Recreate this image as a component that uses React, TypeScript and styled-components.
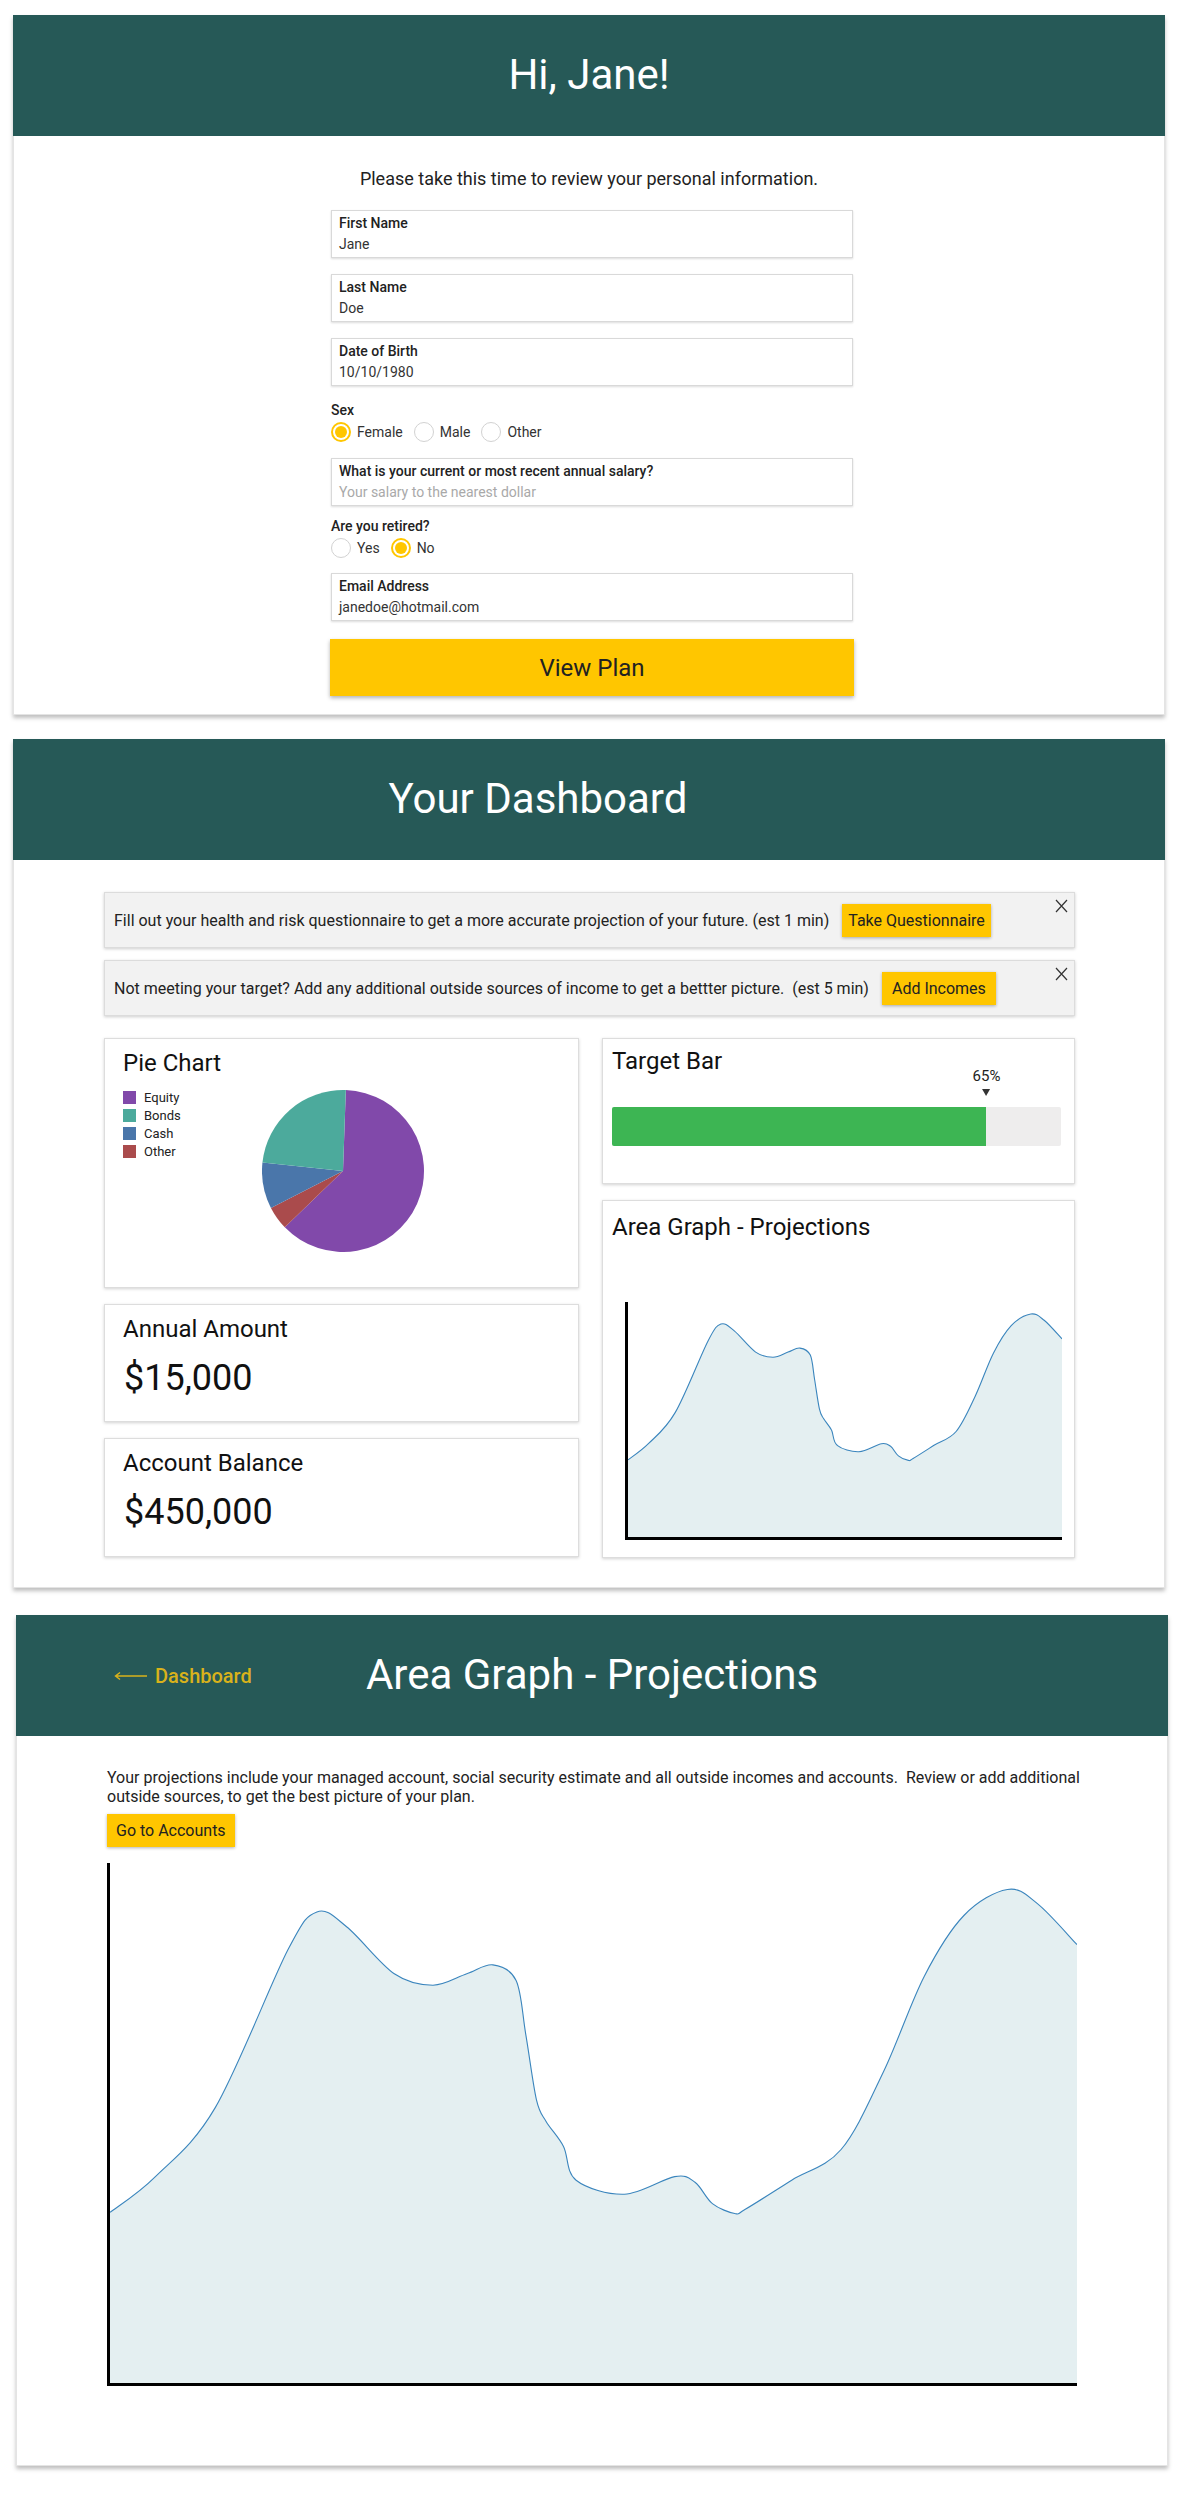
import React from "react";
import styled, { createGlobalStyle } from "styled-components";

const GlobalStyle = createGlobalStyle`
  html, body { margin: 0; padding: 0; background: #ffffff; }
  body {
    font-family: Roboto, "Liberation Sans", Arial, sans-serif;
    color: #222222;
  }
  * { box-sizing: border-box; }
`;

const TEAL = "#265957";
const YELLOW = "#FFC600";

const Page = styled.div`
  width: 1196px;
  padding-bottom: 48px;
  display: flex;
  flex-direction: column;
`;

const Card = styled.section<{ $left: number; $top: number }>`
  margin: ${(p) => p.$top}px 0 0 ${(p) => p.$left}px;
  width: 1152px;
  background: #ffffff;
  border: 1px solid #e4e4e4;
  border-top: none;
  box-shadow: 0 3px 4px rgba(0, 0, 0, 0.25);
`;

const Header = styled.header<{ $shift?: number }>`
  height: 121px;
  margin: 0 -1px;
  background: ${TEAL};
  display: grid;
  grid-template-columns: 1fr auto 1fr;
  align-items: center;
  padding-right: ${(p) => p.$shift ?? 0}px;
`;

const HeaderTitle = styled.h1<{ $size: number }>`
  grid-column: 2;
  margin: 0;
  font-size: ${(p) => p.$size}px;
  font-weight: 400;
  line-height: 1.2;
  color: #ffffff;
  white-space: nowrap;
`;

const BackLink = styled.a`
  grid-column: 1;
  justify-self: start;
  margin-left: 98px;
  display: flex;
  align-items: center;
  gap: 8px;
  color: #d9b21b;
  font-size: 20px;
  font-weight: 500;
  text-decoration: none;
`;

/* ---------- Card 1: personal information form ---------- */

const FormBody = styled.div`
  padding: 32px 0 18px;
  display: flex;
  flex-direction: column;
  align-items: center;
`;

const Intro = styled.p`
  margin: 0 0 21px;
  font-size: 18px;
  line-height: 21px;
  color: #222222;
`;

const Form = styled.div`
  width: 522px;
  margin-left: 6px;
  display: flex;
  flex-direction: column;
`;

const Field = styled.div<{ $gap: number }>`
  margin-top: ${(p) => p.$gap}px;
  height: 48px;
  padding: 4px 7px 3px;
  border: 1px solid #d9d9d9;
  box-shadow: 0 1px 2px rgba(0, 0, 0, 0.14);
  background: #ffffff;
`;

const FieldLabel = styled.div`
  font-size: 14px;
  font-weight: 500;
  line-height: 17px;
  color: #222222;
`;

const FieldValue = styled.div<{ $placeholder?: boolean }>`
  margin-top: 4px;
  font-size: 14px;
  line-height: 17px;
  color: ${(p) => (p.$placeholder ? "#a9a9a9" : "#333333")};
`;

const GroupLabel = styled.div<{ $gap: number }>`
  margin-top: ${(p) => p.$gap}px;
  font-size: 14px;
  font-weight: 500;
  line-height: 16px;
  color: #222222;
`;

const RadioRow = styled.div`
  margin-top: 4px;
  height: 20px;
  display: flex;
  align-items: center;
  gap: 11px;
`;

const RadioOption = styled.label`
  display: flex;
  align-items: center;
  gap: 6px;
  font-size: 14px;
  color: #333333;
`;

const RadioCircle = styled.span<{ $checked?: boolean }>`
  width: 20px;
  height: 20px;
  border-radius: 50%;
  border: ${(p) => (p.$checked ? `2px solid ${YELLOW}` : "1px solid #d2d2d2")};
  background: #ffffff;
  display: inline-flex;
  align-items: center;
  justify-content: center;
  &::after {
    content: "";
    width: 12px;
    height: 12px;
    border-radius: 50%;
    background: ${(p) => (p.$checked ? YELLOW : "transparent")};
  }
`;

const PrimaryButton = styled.button`
  margin: 18px 0 0 -1px;
  width: 524px;
  height: 57px;
  border: none;
  background: ${YELLOW};
  box-shadow: 0 2px 4px rgba(0, 0, 0, 0.3);
  font-family: inherit;
  font-size: 24px;
  color: #222222;
  cursor: pointer;
`;

/* ---------- Card 2: dashboard ---------- */

const DashBody = styled.div`
  padding: 32px 89px 29px 90px;
  display: flex;
  flex-direction: column;
`;

const Banner = styled.div<{ $gap: number }>`
  position: relative;
  margin-top: ${(p) => p.$gap}px;
  height: 56px;
  padding: 0 9px;
  display: flex;
  align-items: center;
  gap: 13px;
  background: #f2f2f2;
  border: 1px solid #dcdcdc;
  box-shadow: 0 1px 3px rgba(0, 0, 0, 0.2);
  font-size: 16px;
  color: #222222;
  white-space: pre;
`;

const CloseButton = styled.button`
  position: absolute;
  top: 5px;
  right: 5px;
  width: 15px;
  height: 15px;
  padding: 0;
  border: none;
  background: transparent;
  display: flex;
  align-items: center;
  justify-content: center;
`;

const SmallButton = styled.button<{ $padX?: number }>`
  height: 33px;
  padding: 0 ${(p) => p.$padX ?? 6}px;
  border: none;
  background: ${YELLOW};
  box-shadow: 0 1px 3px rgba(0, 0, 0, 0.3);
  font-family: inherit;
  font-size: 16px;
  color: #222222;
  cursor: pointer;
`;

const DashGrid = styled.div`
  margin-top: 22px;
  display: grid;
  grid-template-columns: 475px 473px;
  column-gap: 23px;
`;

const Column = styled.div`
  display: flex;
  flex-direction: column;
  gap: 16px;
`;

const Tile = styled.div<{ $h: number; $pad: string }>`
  height: ${(p) => p.$h}px;
  padding: ${(p) => p.$pad};
  background: #ffffff;
  border: 1px solid #dddddd;
  box-shadow: 0 1px 3px rgba(0, 0, 0, 0.18);
  display: flex;
  flex-direction: column;
`;

const TileTitle = styled.h2<{ $lh?: number }>`
  margin: 0;
  font-size: 24px;
  font-weight: 400;
  line-height: ${(p) => p.$lh ?? 28}px;
  color: #111111;
`;

const BigValue = styled.div`
  margin-top: 14px;
  margin-left: 1px;
  font-size: 36px;
  line-height: 42px;
  color: #111111;
`;

const PieRow = styled.div`
  margin-top: 13px;
  display: flex;
  align-items: flex-start;
`;

const Legend = styled.ul`
  list-style: none;
  margin: -2px 0 0;
  padding: 0;
  width: 139px;
`;

const LegendItem = styled.li`
  height: 18px;
  display: flex;
  align-items: center;
  gap: 8px;
  font-size: 13px;
  color: #222222;
`;

const Swatch = styled.span<{ $color: string }>`
  width: 13px;
  height: 13px;
  background: ${(p) => p.$color};
`;

const BarTrack = styled.div`
  position: relative;
  margin-top: 34px;
  height: 39px;
  border-radius: 2px;
  background: #eeeded;
`;

const BarFill = styled.div`
  height: 100%;
  border-radius: 2px 0 0 2px;
  background: #3db553;
`;

const BarMarker = styled.div`
  position: absolute;
  bottom: calc(100% + 11px);
  transform: translateX(-50%);
  display: flex;
  flex-direction: column;
  align-items: center;
  gap: 4px;
  font-size: 15px;
  line-height: 17px;
  color: #222222;
`;

const Triangle = styled.span`
  width: 0;
  height: 0;
  border-left: 4px solid transparent;
  border-right: 4px solid transparent;
  border-top: 7px solid #333333;
`;

const ChartBox = styled.div<{ $top: number; $left: number }>`
  margin: ${(p) => p.$top}px 0 0 ${(p) => p.$left}px;
  line-height: 0;
`;

/* ---------- Card 3: projections ---------- */

const ProjBody = styled.div`
  padding: 32px 0 79px 90px;
  display: flex;
  flex-direction: column;
  align-items: flex-start;
`;

const ProjText = styled.p`
  margin: 0;
  width: 990px;
  font-size: 16px;
  line-height: 19px;
  color: #222222;
  white-space: pre-wrap;
`;

const AccountsButton = styled(SmallButton)`
  margin-top: 8px;
`;

/* ---------- drawings ---------- */

const CURVE: [number, number][] = [
  [0, 0.328],
  [0.047, 0.397],
  [0.109, 0.53],
  [0.184, 0.833],
  [0.214, 0.906],
  [0.245, 0.877],
  [0.294, 0.787],
  [0.334, 0.765],
  [0.369, 0.787],
  [0.396, 0.804],
  [0.42, 0.774],
  [0.43, 0.67],
  [0.441, 0.545],
  [0.451, 0.503],
  [0.469, 0.455],
  [0.482, 0.39],
  [0.532, 0.363],
  [0.584, 0.397],
  [0.605, 0.386],
  [0.623, 0.345],
  [0.646, 0.326],
  [0.657, 0.334],
  [0.705, 0.39],
  [0.756, 0.449],
  [0.8, 0.599],
  [0.842, 0.782],
  [0.883, 0.899],
  [0.928, 0.949],
  [0.959, 0.922],
  [1, 0.843],
];

function curvePath(w: number, h: number, x0: number, y0: number): string {
  const pts = CURVE.map(([nx, ny]) => [x0 + nx * w, y0 - ny * h]);
  let d = `M${pts[0][0].toFixed(1)},${pts[0][1].toFixed(1)}`;
  for (let i = 0; i < pts.length - 1; i++) {
    const p0 = pts[Math.max(0, i - 1)];
    const p1 = pts[i];
    const p2 = pts[i + 1];
    const p3 = pts[Math.min(pts.length - 1, i + 2)];
    const c1x = p1[0] + (p2[0] - p0[0]) / 6;
    const c1y = p1[1] + (p2[1] - p0[1]) / 6;
    const c2x = p2[0] - (p3[0] - p1[0]) / 6;
    const c2y = p2[1] - (p3[1] - p1[1]) / 6;
    d += ` C${c1x.toFixed(1)},${c1y.toFixed(1)} ${c2x.toFixed(1)},${c2y.toFixed(1)} ${p2[0].toFixed(1)},${p2[1].toFixed(1)}`;
  }
  return d;
}

function AreaChart({ width, height }: { width: number; height: number }) {
  const x0 = 3;
  const y0 = height - 3;
  const pw = width - 3;
  const ph = height - 3;
  const line = curvePath(pw, ph, x0, y0);
  const fill = `M${x0},${y0} L${x0},${(y0 - CURVE[0][1] * ph).toFixed(1)} ${line.slice(1)} L${x0 + pw},${y0} Z`;
  return (
    <svg width={width} height={height} viewBox={`0 0 ${width} ${height}`}>
      <path d={fill} fill="#e4eff1" />
      <path d={line} fill="none" stroke="#3a85bd" strokeWidth={1.1} />
      <line x1={1.5} y1={0} x2={1.5} y2={height} stroke="#000" strokeWidth={3} />
      <line x1={0} y1={height - 1.5} x2={width} y2={height - 1.5} stroke="#000" strokeWidth={3} />
    </svg>
  );
}

const SLICES = [
  { name: "Equity", color: "#8149aa", pct: 62.2 },
  { name: "Other", color: "#aa4b4c", pct: 4.7 },
  { name: "Cash", color: "#4a76aa", pct: 9.2 },
  { name: "Bonds", color: "#4caa9c", pct: 23.9 },
];

const LEGEND = ["Equity", "Bonds", "Cash", "Other"];

function PieChart({ size }: { size: number }) {
  const r = size / 2;
  const c = r;
  let angle = 2;
  const pt = (deg: number) => {
    const rad = (deg * Math.PI) / 180;
    return [c + r * Math.sin(rad), c - r * Math.cos(rad)];
  };
  return (
    <svg width={size} height={size} viewBox={`0 0 ${size} ${size}`}>
      {SLICES.map((s) => {
        const sweep = (s.pct / 100) * 360;
        const [ax, ay] = pt(angle);
        const [bx, by] = pt(angle + sweep);
        angle += sweep;
        const large = sweep > 180 ? 1 : 0;
        return (
          <path
            key={s.name}
            d={`M${c},${c} L${ax.toFixed(2)},${ay.toFixed(2)} A${r},${r} 0 ${large} 1 ${bx.toFixed(2)},${by.toFixed(2)} Z`}
            fill={s.color}
          />
        );
      })}
    </svg>
  );
}

function CloseIcon() {
  return (
    <svg width="13" height="14" viewBox="0 0 13 14">
      <path d="M1 1 L12 13 M12 1 L1 13" stroke="#333" strokeWidth="1.2" fill="none" />
    </svg>
  );
}

function LongArrow() {
  return (
    <svg width="33" height="10" viewBox="0 0 33 10">
      <path d="M33 5 H1.5 M6 1.5 L1.5 5 L6 8.5" stroke="#d9b21b" strokeWidth="1.4" fill="none" />
    </svg>
  );
}

function Radio({ label, checked }: { label: string; checked?: boolean }) {
  return (
    <RadioOption>
      <RadioCircle $checked={checked} />
      {label}
    </RadioOption>
  );
}

const colorOf = (name: string) => SLICES.find((s) => s.name === name)!.color;

export default function App() {
  const target = 83.4;
  return (
    <>
      <GlobalStyle />
      <Page>
        <Card $left={13} $top={15}>
          <Header>
            <HeaderTitle $size={42}>Hi, Jane!</HeaderTitle>
          </Header>
          <FormBody>
            <Intro>Please take this time to review your personal information.</Intro>
            <Form>
              <Field $gap={0}>
                <FieldLabel>First Name</FieldLabel>
                <FieldValue>Jane</FieldValue>
              </Field>
              <Field $gap={16}>
                <FieldLabel>Last Name</FieldLabel>
                <FieldValue>Doe</FieldValue>
              </Field>
              <Field $gap={16}>
                <FieldLabel>Date of Birth</FieldLabel>
                <FieldValue>10/10/1980</FieldValue>
              </Field>
              <GroupLabel $gap={16}>Sex</GroupLabel>
              <RadioRow>
                <Radio label="Female" checked />
                <Radio label="Male" />
                <Radio label="Other" />
              </RadioRow>
              <Field $gap={16}>
                <FieldLabel>What is your current or most recent annual salary?</FieldLabel>
                <FieldValue $placeholder>Your salary to the nearest dollar</FieldValue>
              </Field>
              <GroupLabel $gap={12}>Are you retired?</GroupLabel>
              <RadioRow>
                <Radio label="Yes" />
                <Radio label="No" checked />
              </RadioRow>
              <Field $gap={15}>
                <FieldLabel>Email Address</FieldLabel>
                <FieldValue>janedoe@hotmail.com</FieldValue>
              </Field>
              <PrimaryButton>View Plan</PrimaryButton>
            </Form>
          </FormBody>
        </Card>

        <Card $left={13} $top={24}>
          <Header $shift={102}>
            <HeaderTitle $size={42}>Your Dashboard</HeaderTitle>
          </Header>
          <DashBody>
            <Banner $gap={0}>
              <span>Fill out your health and risk questionnaire to get a more accurate projection of your future. (est 1 min)</span>
              <SmallButton>Take Questionnaire</SmallButton>
              <CloseButton aria-label="close">
                <CloseIcon />
              </CloseButton>
            </Banner>
            <Banner $gap={12}>
              <span>Not meeting your target? Add any additional outside sources of income to get a bettter picture.  (est 5 min)</span>
              <SmallButton $padX={10}>Add Incomes</SmallButton>
              <CloseButton aria-label="close">
                <CloseIcon />
              </CloseButton>
            </Banner>
            <DashGrid>
              <Column>
                <Tile $h={250} $pad="10px 18px">
                  <TileTitle>Pie Chart</TileTitle>
                  <PieRow>
                    <Legend>
                      {LEGEND.map((n) => (
                        <LegendItem key={n}>
                          <Swatch $color={colorOf(n)} />
                          {n}
                        </LegendItem>
                      ))}
                    </Legend>
                    <PieChart size={162} />
                  </PieRow>
                </Tile>
                <Tile $h={118} $pad="10px 18px">
                  <TileTitle>Annual Amount</TileTitle>
                  <BigValue>$15,000</BigValue>
                </Tile>
                <Tile $h={119} $pad="10px 18px">
                  <TileTitle>Account Balance</TileTitle>
                  <BigValue>$450,000</BigValue>
                </Tile>
              </Column>
              <Column>
                <Tile $h={146} $pad="10px 13px 0 9px">
                  <TileTitle $lh={24}>Target Bar</TileTitle>
                  <BarTrack>
                    <BarFill style={{ width: `${target}%` }} />
                    <BarMarker style={{ left: `${target}%` }}>
                      65%
                      <Triangle />
                    </BarMarker>
                  </BarTrack>
                </Tile>
                <Tile $h={358} $pad="12px 0 0 9px">
                  <TileTitle>Area Graph - Projections</TileTitle>
                  <ChartBox $top={61} $left={13}>
                    <AreaChart width={437} height={238} />
                  </ChartBox>
                </Tile>
              </Column>
            </DashGrid>
          </DashBody>
        </Card>

        <Card $left={16} $top={27}>
          <Header>
            <BackLink href="#">
              <LongArrow />
              Dashboard
            </BackLink>
            <HeaderTitle $size={42}>Area Graph - Projections</HeaderTitle>
          </Header>
          <ProjBody>
            <ProjText>
              Your projections include your managed account, social security estimate and all outside incomes and accounts.  Review or add additional outside sources, to get the best picture of your plan.
            </ProjText>
            <AccountsButton $padX={9}>Go to Accounts</AccountsButton>
            <ChartBox $top={16} $left={0}>
              <AreaChart width={970} height={523} />
            </ChartBox>
          </ProjBody>
        </Card>
      </Page>
    </>
  );
}
